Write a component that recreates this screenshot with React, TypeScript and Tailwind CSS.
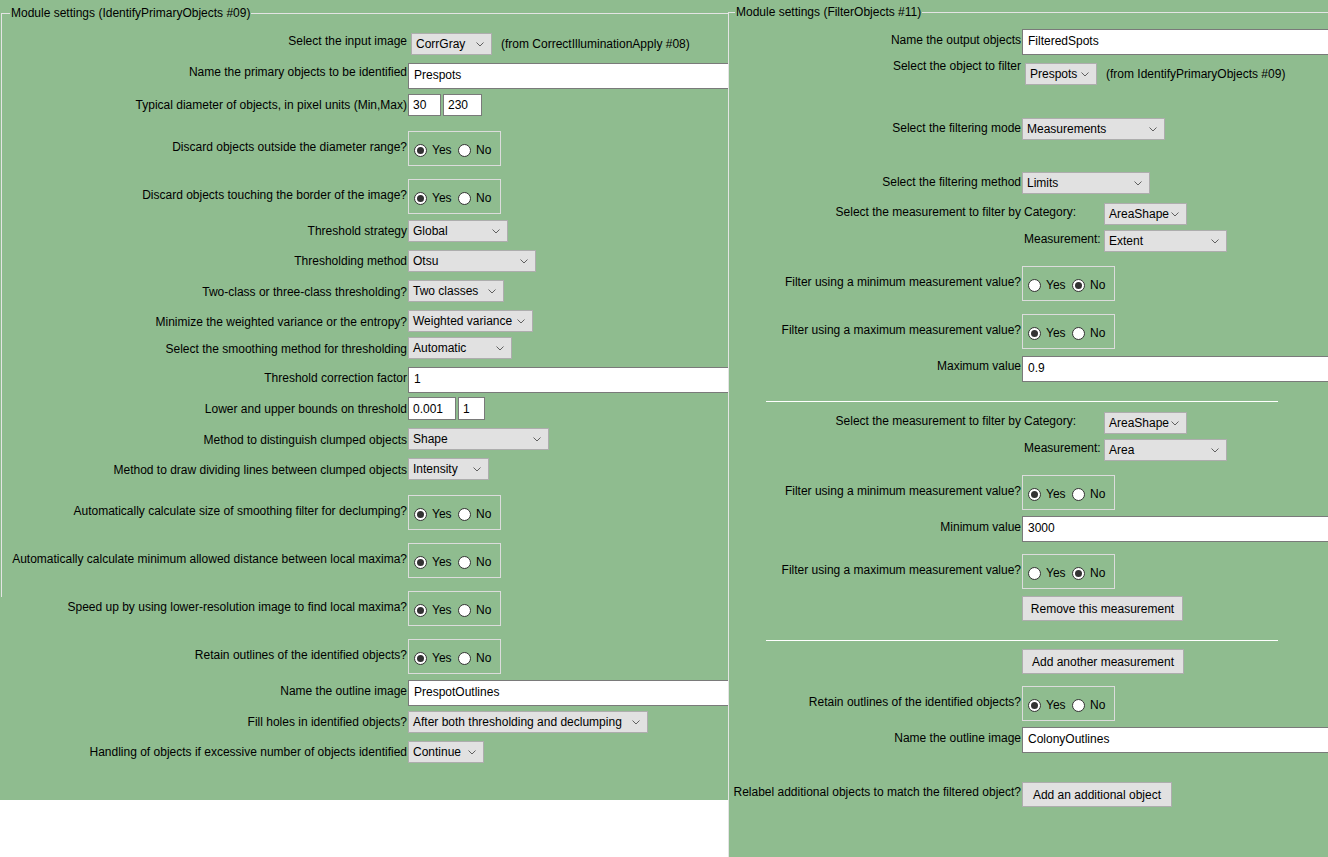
import { ReactNode } from 'react'

const Chevron = () => (
    <svg width="8" height="5" viewBox="0 0 8 5" className="shrink-0">
        <polyline points="0.5,0.5 4,4 7.5,0.5" fill="none" stroke="#606060" strokeWidth="1" />
    </svg>
)

function Select({ value, className = '' }: { value: string; className?: string }) {
    return (
        <div className={`flex h-[22px] shrink-0 items-center justify-between border border-[#adadad] bg-[#e1e1e1] pl-[4px] pr-[7px] ${className}`}>
            <span className="whitespace-nowrap">{value}</span>
            <Chevron />
        </div>
    )
}

function TextBox({ value, className = '' }: { value: string; className?: string }) {
    return (
        <div className={`h-[26px] border border-[#7a7a7a] bg-white pl-[5px] pt-[3px] ${className}`}>
            {value}
        </div>
    )
}

function SmallBox({ value, className = '' }: { value: string; className?: string }) {
    return (
        <div className={`flex h-[22px] items-center border border-[#7a7a7a] bg-white pl-[4px] ${className}`}>
            {value}
        </div>
    )
}

function Radio({ checked, label, className = '' }: { checked: boolean; label: string; className?: string }) {
    return (
        <div className={`flex items-center ${className}`}>
            <span className="flex h-[13px] w-[13px] items-center justify-center rounded-full border border-[#333] bg-white">
                {checked && <span className="h-[7px] w-[7px] rounded-full bg-[#333]" />}
            </span>
            <span className="ml-[5px]">{label}</span>
        </div>
    )
}

function YesNo({ yes }: { yes: boolean }) {
    return (
        <div className="flex h-[35px] w-[93px] items-start border border-[#dcdcdc] pl-[5px] pt-[10px]">
            <Radio checked={yes} label="Yes" className="w-[44px]" />
            <Radio checked={!yes} label="No" />
        </div>
    )
}

function Button({ label, className = '' }: { label: string; className?: string }) {
    return (
        <div className={`flex h-[25px] items-center justify-center border border-[#adadad] bg-[#e1e1e1] ${className}`}>
            {label}
        </div>
    )
}

function Row({
    label,
    h,
    lt = '',
    lw,
    children,
}: {
    label?: string
    h: string
    lt?: string
    lw: string
    children?: ReactNode
}) {
    return (
        <div className={`flex items-start ${h}`}>
            <div className={`flex shrink-0 justify-end whitespace-nowrap ${lw} ${lt}`}>{label}</div>
            <div className="ml-[1px] flex min-w-0 flex-1 items-start">{children}</div>
        </div>
    )
}

function LeftPanel() {
    const lw = 'w-[405px]'
    return (
        <div className="h-[800px] w-[728px] shrink-0 overflow-hidden bg-[#8fbc8f]">
            <fieldset className="ml-[1px] mt-[5px] h-[592px] w-[760px] border-l border-t border-[#e4e4e4] pt-[9px]">
                <legend className="ml-[8px] px-[1px] leading-[16px]">Module settings (IdentifyPrimaryObjects #09)</legend>
                <Row lw={lw} h="h-[33px]" lt="mt-[3px]" label="Select the input image">
                    <div className="flex items-start p-[3px]">
                        <Select value="CorrGray" className="w-[81px]" />
                        <span className="ml-[9px] mt-[3px] whitespace-nowrap">(from CorrectIlluminationApply #08)</span>
                    </div>
                </Row>
                <Row lw={lw} h="h-[31px]" lt="mt-[1px]" label="Name the primary objects to be identified">
                    <TextBox value="Prespots" className="flex-1" />
                </Row>
                <Row lw={lw} h="h-[37px]" lt="mt-[3px]" label="Typical diameter of objects, in pixel units (Min,Max)">
                    <SmallBox value="30" className="w-[33px]" />
                    <SmallBox value="230" className="ml-[2px] w-[39px]" />
                </Row>
                <Row lw={lw} h="h-[48px]" lt="mt-[8px]" label="Discard objects outside the diameter range?">
                    <YesNo yes />
                </Row>
                <Row lw={lw} h="h-[41px]" lt="mt-[8px]" label="Discard objects touching the border of the image?">
                    <YesNo yes />
                </Row>
                <Row lw={lw} h="h-[30px]" lt="mt-[3px]" label="Threshold strategy">
                    <Select value="Global" className="w-[100px]" />
                </Row>
                <Row lw={lw} h="h-[30px]" lt="mt-[3px]" label="Thresholding method">
                    <Select value="Otsu" className="w-[128px]" />
                </Row>
                <Row lw={lw} h="h-[30px]" lt="mt-[4px]" label="Two-class or three-class thresholding?">
                    <Select value="Two classes" className="w-[96px]" />
                </Row>
                <Row lw={lw} h="h-[27px]" lt="mt-[4px]" label="Minimize the weighted variance or the entropy?">
                    <Select value="Weighted variance" className="w-[125px]" />
                </Row>
                <Row lw={lw} h="h-[30px]" lt="mt-[4px]" label="Select the smoothing method for thresholding">
                    <Select value="Automatic" className="w-[104px]" />
                </Row>
                <Row lw={lw} h="h-[30px]" lt="mt-[3px]" label="Threshold correction factor">
                    <TextBox value="1" className="flex-1" />
                </Row>
                <Row lw={lw} h="h-[31px]" lt="mt-[4px]" label="Lower and upper bounds on threshold">
                    <SmallBox value="0.001" className="h-[23px] w-[48px]" />
                    <SmallBox value="1" className="ml-[2px] h-[23px] w-[27px]" />
                </Row>
                <Row lw={lw} h="h-[30px]" lt="mt-[4px]" label="Method to distinguish clumped objects">
                    <Select value="Shape" className="w-[141px]" />
                </Row>
                <Row lw={lw} h="h-[37px]" lt="mt-[4px]" label="Method to draw dividing lines between clumped objects">
                    <Select value="Intensity" className="w-[81px]" />
                </Row>
                <Row lw={lw} h="h-[48px]" lt="mt-[8px]" label="Automatically calculate size of smoothing filter for declumping?">
                    <YesNo yes />
                </Row>
                <Row lw={lw} h="h-[48px]" lt="mt-[8px]" label="Automatically calculate minimum allowed distance between local maxima?">
                    <YesNo yes />
                </Row>
                <Row lw={lw} h="h-[48px]" lt="mt-[8px]" label="Speed up by using lower-resolution image to find local maxima?">
                    <YesNo yes />
                </Row>
                <Row lw={lw} h="h-[41px]" lt="mt-[8px]" label="Retain outlines of the identified objects?">
                    <YesNo yes />
                </Row>
                <Row lw={lw} h="h-[31px]" lt="mt-[3px]" label="Name the outline image">
                    <TextBox value="PrespotOutlines" className="flex-1" />
                </Row>
                <Row lw={lw} h="h-[30px]" lt="mt-[3px]" label="Fill holes in identified objects?">
                    <Select value="After both thresholding and declumping" className="w-[240px]" />
                </Row>
                <Row lw={lw} h="h-[30px]" lt="mt-[3px]" label="Handling of objects if excessive number of objects identified">
                    <Select value="Continue" className="w-[76px]" />
                </Row>
            </fieldset>
        </div>
    )
}

function MeasurementPick({ measurement, w }: { measurement: string; w: string }) {
    return (
        <div className="flex flex-col gap-[5px]">
            <div className="flex items-start">
                <span className="mt-[1px] w-[82px] pl-[2px]">Category:</span>
                <Select value="AreaShape" className="w-[83px]" />
            </div>
            <div className="flex items-start">
                <span className="mt-[1px] w-[82px] pl-[2px]">Measurement:</span>
                <Select value={measurement} className={w} />
            </div>
        </div>
    )
}

function Divider({ h }: { h: string }) {
    return (
        <div className={h}>
            <div className="ml-[37px] h-px w-[512px] bg-white" />
        </div>
    )
}

function RightPanel() {
    const lw = 'w-[292px]'
    return (
        <div className="h-full min-w-0 flex-1 overflow-hidden bg-[#8fbc8f]">
            <fieldset className="mt-[4px] h-[900px] w-[640px] border-l border-t border-[#e4e4e4] pt-[9px]">
                <legend className="ml-[6px] px-[1px] leading-[16px]">Module settings (FilterObjects #11)</legend>
                <Row lw={lw} h="h-[28px]" lt="mt-[3px]" label="Name the output objects">
                    <TextBox value="FilteredSpots" className="flex-1" />
                </Row>
                <Row lw={lw} h="h-[61px]" lt="mt-[1px]" label="Select the object to filter">
                    <div className="mt-[3px] flex items-start p-[3px]">
                        <Select value="Prespots" className="w-[72px]" />
                        <span className="ml-[9px] mt-[3px] whitespace-nowrap">(from IdentifyPrimaryObjects #09)</span>
                    </div>
                </Row>
                <Row lw={lw} h="h-[54px]" lt="mt-[2px]" label="Select the filtering mode">
                    <Select value="Measurements" className="w-[143px]" />
                </Row>
                <Row lw={lw} h="h-[31px]" lt="mt-[2px]" label="Select the filtering method">
                    <Select value="Limits" className="w-[128px]" />
                </Row>
                <Row lw={lw} h="h-[63px]" lt="mt-[1px]" label="Select the measurement to filter by">
                    <MeasurementPick measurement="Extent" w="w-[123px]" />
                </Row>
                <Row lw={lw} h="h-[48px]" lt="mt-[8px]" label="Filter using a minimum measurement value?">
                    <YesNo yes={false} />
                </Row>
                <Row lw={lw} h="h-[42px]" lt="mt-[8px]" label="Filter using a maximum measurement value?">
                    <YesNo yes />
                </Row>
                <Row lw={lw} h="h-[45px]" lt="mt-[2px]" label="Maximum value">
                    <TextBox value="0.9" className="flex-1" />
                </Row>
                <Divider h="h-[11px]" />
                <Row lw={lw} h="h-[63px]" lt="mt-[1px]" label="Select the measurement to filter by">
                    <MeasurementPick measurement="Area" w="w-[123px]" />
                </Row>
                <Row lw={lw} h="h-[41px]" lt="mt-[8px]" label="Filter using a minimum measurement value?">
                    <YesNo yes />
                </Row>
                <Row lw={lw} h="h-[38px]" lt="mt-[3px]" label="Minimum value">
                    <TextBox value="3000" className="flex-1" />
                </Row>
                <Row lw={lw} h="h-[42px]" lt="mt-[8px]" label="Filter using a maximum measurement value?">
                    <YesNo yes={false} />
                </Row>
                <Row lw={lw} h="h-[44px]">
                    <Button label="Remove this measurement" className="w-[161px]" />
                </Row>
                <Divider h="h-[9px]" />
                <Row lw={lw} h="h-[37px]">
                    <Button label="Add another measurement" className="w-[162px]" />
                </Row>
                <Row lw={lw} h="h-[41px]" lt="mt-[8px]" label="Retain outlines of the identified objects?">
                    <YesNo yes />
                </Row>
                <Row lw={lw} h="h-[55px]" lt="mt-[3px]" label="Name the outline image">
                    <TextBox value="ColonyOutlines" className="flex-1" />
                </Row>
                <Row lw={lw} h="h-[40px]" lt="mt-[2px]" label="Relabel additional objects to match the filtered object?">
                    <Button label="Add an additional object" className="w-[150px]" />
                </Row>
            </fieldset>
        </div>
    )
}

export default function App() {
    return (
        <div className="flex h-[857px] w-[1328px] overflow-hidden bg-white font-['Liberation_Sans',Arial,sans-serif] text-[12px] leading-[16px] text-black">
            <LeftPanel />
            <RightPanel />
        </div>
    )
}
